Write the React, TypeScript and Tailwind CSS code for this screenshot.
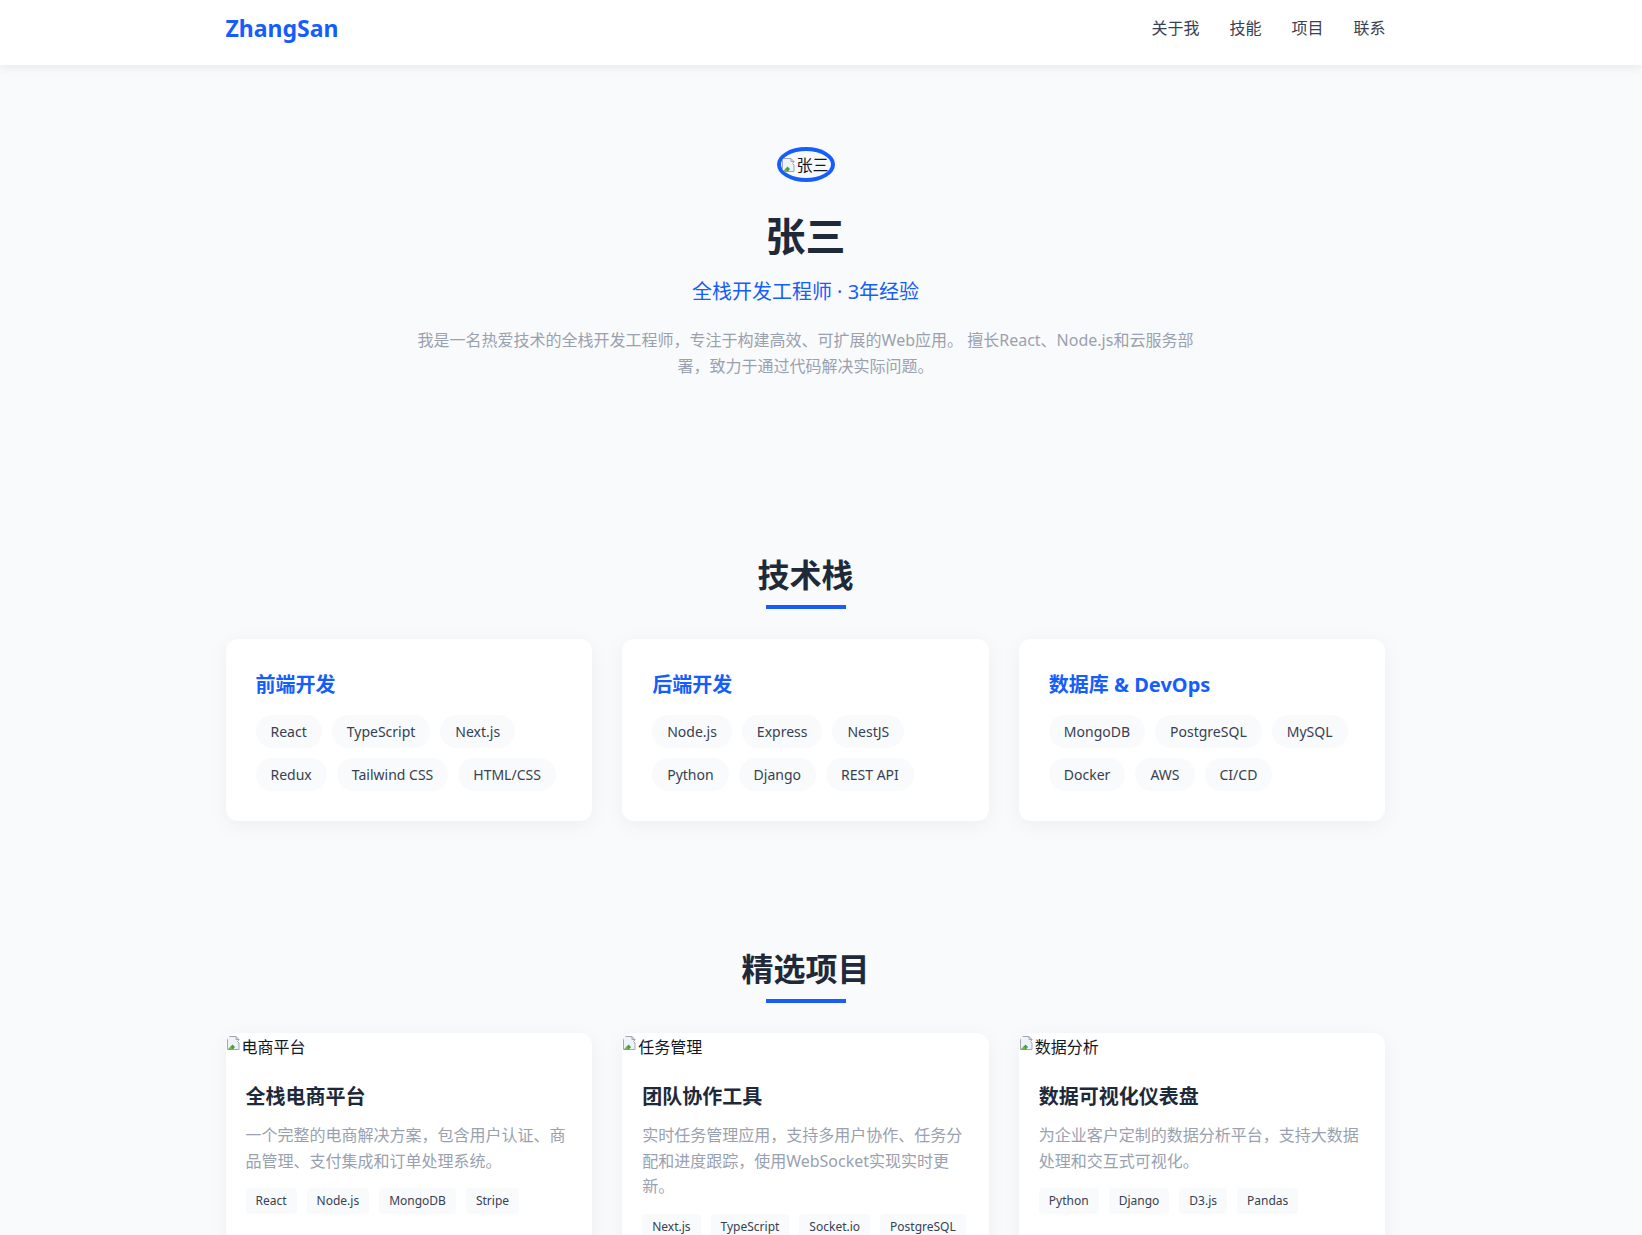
import React from 'react'

const skills = [
  { title: '前端开发', items: ['React', 'TypeScript', 'Next.js', 'Redux', 'Tailwind CSS', 'HTML/CSS'] },
  { title: '后端开发', items: ['Node.js', 'Express', 'NestJS', 'Python', 'Django', 'REST API'] },
  { title: '数据库 & DevOps', items: ['MongoDB', 'PostgreSQL', 'MySQL', 'Docker', 'AWS', 'CI/CD'] },
]

const projects = [
  {
    alt: '电商平台',
    title: '全栈电商平台',
    desc: '一个完整的电商解决方案，包含用户认证、商品管理、支付集成和订单处理系统。',
    tags: ['React', 'Node.js', 'MongoDB', 'Stripe'],
  },
  {
    alt: '任务管理',
    title: '团队协作工具',
    desc: '实时任务管理应用，支持多用户协作、任务分配和进度跟踪，使用WebSocket实现实时更新。',
    tags: ['Next.js', 'TypeScript', 'Socket.io', 'PostgreSQL'],
  },
  {
    alt: '数据分析',
    title: '数据可视化仪表盘',
    desc: '为企业客户定制的数据分析平台，支持大数据处理和交互式可视化。',
    tags: ['Python', 'Django', 'D3.js', 'Pandas'],
  },
]

// chrome-style "broken image" glyph
function BrokenImage() {
  return (
    <svg width="16" height="16" viewBox="0 0 16 16" className="shrink-0">
      <path d="M1.5 1.5h8.5l3 3v0.5l-1.5 1.5 1.5 1.5v6.5h-11.5z" fill="#eef3f9" stroke="#a0a6ad" />
      <path d="M10 1.5v3h3" fill="none" stroke="#a0a6ad" />
      <path d="M2 14.5l4.5-5 2.5 2.5-2 2.5z" fill="#43a047" />
      <path d="M2 14.5l3-3.5 1.5 3.5z" fill="#7cb342" />
    </svg>
  )
}

function SectionTitle({ children }: { children: React.ReactNode }) {
  return (
    <div className="flex flex-col items-center mb-[30px]">
      <h2 className="text-[32px] leading-10 font-bold text-gray-800">{children}</h2>
      <div className="mt-[10px] h-1 w-20 bg-blue-600" />
    </div>
  )
}

export default function App() {
  return (
    <div
      className="min-h-screen bg-gray-50 text-gray-800"
      style={{ fontFamily: '"Noto Sans", "Noto Sans CJK SC", sans-serif' }}
    >
      {/* Nav */}
      <nav className="h-[65px] bg-white shadow-[0_2px_10px_rgba(0,0,0,0.08)] pr-[31px]">
        <div className="max-w-[1160px] mx-auto h-14 flex items-center justify-between">
          <a className="text-[23px] leading-8 font-bold text-blue-600">ZhangSan</a>
          <div className="flex gap-[30px] text-base text-gray-700">
            <a>关于我</a>
            <a>技能</a>
            <a>项目</a>
            <a>联系</a>
          </div>
        </div>
      </nav>

      <div className="pr-[31px]">
        {/* Hero */}
        <section className="pt-[82px] pb-[80px] text-center">
          <div className="flex justify-center mb-[30px]">
            <span className="w-[58px] h-[35px] rounded-[50%] border-4 border-blue-600 flex items-center overflow-hidden">
              <BrokenImage />
              <span className="text-base leading-6 text-gray-900">张三</span>
            </span>
          </div>
          <h1 className="text-[40px] leading-[48px] font-bold text-gray-800 mb-[18px]">张三</h1>
          <p className="text-xl leading-7 text-blue-600 mb-[22px]">全栈开发工程师 · 3年经验</p>
          <p className="max-w-[790px] mx-auto text-base leading-[1.6] text-gray-400">
            我是一名热爱技术的全栈开发工程师，专注于构建高效、可扩展的Web应用。 擅长React、Node.js和云服务部署，致力于通过代码解决实际问题。
          </p>
        </section>

        {/* Skills */}
        <section className="pt-[96px] pb-[32px]">
          <div className="max-w-[1160px] mx-auto">
            <SectionTitle>技术栈</SectionTitle>
            <div className="grid grid-cols-3 gap-[30px]">
              {skills.map((s) => (
                <div key={s.title} className="bg-white rounded-xl p-[30px] shadow-[0_4px_20px_rgba(0,0,0,0.05)]">
                  <h3 className="text-xl leading-8 font-bold text-blue-600 mb-[14px]">{s.title}</h3>
                  <div className="flex flex-wrap gap-2.5">
                    {s.items.map((t) => (
                      <span key={t} className="h-[33px] px-[15px] flex items-center rounded-full bg-gray-50 text-sm text-gray-700">
                        {t}
                      </span>
                    ))}
                  </div>
                </div>
              ))}
            </div>
          </div>
        </section>

        {/* Projects */}
        <section className="pt-[96px] pb-20">
          <div className="max-w-[1160px] mx-auto">
            <SectionTitle>精选项目</SectionTitle>
            <div className="grid grid-cols-3 gap-[30px]">
              {projects.map((p) => (
                <div key={p.title} className="bg-white rounded-xl overflow-hidden shadow-[0_4px_20px_rgba(0,0,0,0.05)]">
                  <div className="h-[30px] pt-0.5 flex items-start">
                    <BrokenImage />
                    <span className="text-base leading-6 text-gray-900">{p.alt}</span>
                  </div>
                  <div className="p-5">
                    <h3 className="text-xl leading-7 font-bold text-gray-800 mb-3">{p.title}</h3>
                    <p className="text-base leading-[1.6] text-gray-400 mb-3.5">{p.desc}</p>
                    <div className="flex flex-wrap gap-2.5">
                      {p.tags.map((t) => (
                        <span key={t} className="h-[26px] px-2.5 flex items-center rounded bg-gray-50 text-xs text-gray-700">
                          {t}
                        </span>
                      ))}
                    </div>
                  </div>
                </div>
              ))}
            </div>
          </div>
        </section>
      </div>
    </div>
  )
}
